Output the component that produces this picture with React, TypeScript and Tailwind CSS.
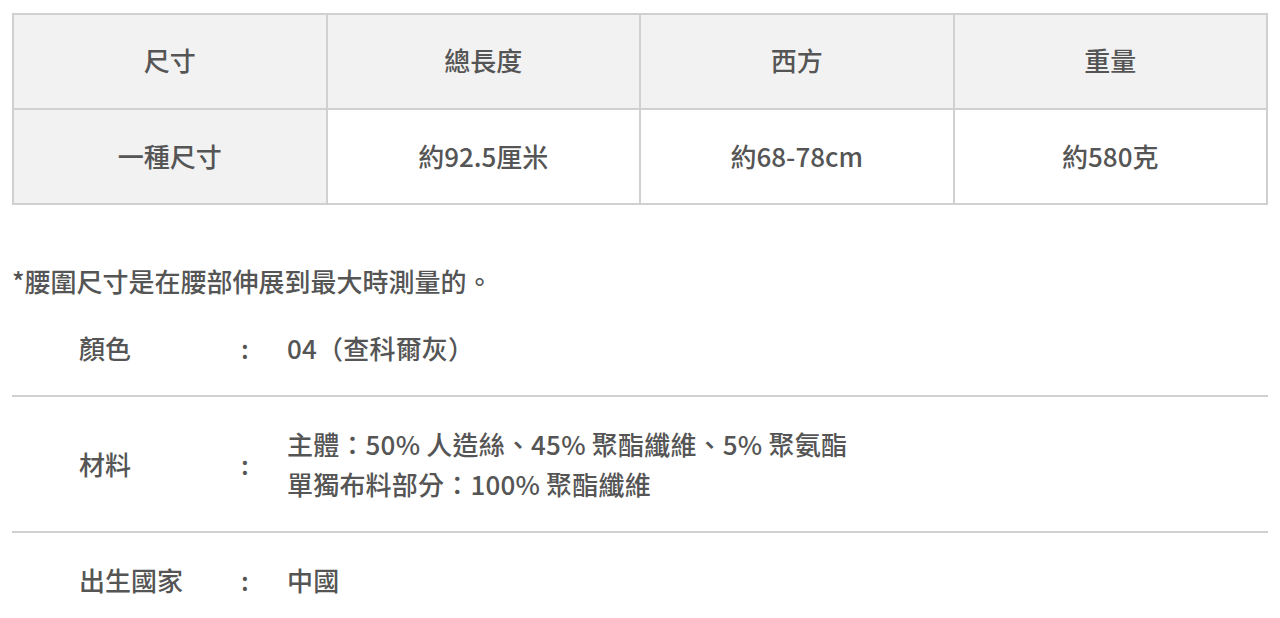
const font = "font-['Noto_Sans_CJK_TC','Noto_Sans',sans-serif]";

const headers = ["尺寸", "總長度", "西方", "重量"];
const values = ["一種尺寸", "約92.5厘米", "約68-78cm", "約580克"];

const specs: { label: string; lines: string[] }[] = [
  { label: "顏色", lines: ["04（查科爾灰）"] },
  {
    label: "材料",
    lines: ["主體：50% 人造絲、45% 聚酯纖維、5% 聚氨酯", "單獨布料部分：100% 聚酯纖維"],
  },
  { label: "出生國家", lines: ["中國"] },
];

export default function App() {
  return (
    <div className={`${font} min-h-[618px] bg-white px-3 pt-[13px] text-[26px] font-medium text-[#555]`}>
      <table className="w-[1256px] table-fixed border-collapse">
        <tbody>
          <tr>
            {headers.map((h) => (
              <td key={h} className="h-[95px] border-2 border-[#d0d0d0] bg-[#f2f2f2] pb-1 text-center">
                {h}
              </td>
            ))}
          </tr>
          <tr>
            {values.map((v, i) => (
              <td
                key={v}
                className={`h-[95px] border-2 border-[#d0d0d0] pb-0.5 text-center ${i === 0 ? "bg-[#f2f2f2]" : "bg-white"}`}
              >
                {v}
              </td>
            ))}
          </tr>
        </tbody>
      </table>

      <p className="mt-[56px] h-[40px] leading-[40px]">*腰圍尺寸是在腰部伸展到最大時測量的。</p>

      <div className="w-[1256px]">
        {specs.map((s, i) => (
          <div
            key={s.label}
            className={`flex items-center py-[27px] ${i < specs.length - 1 ? "border-b-2 border-[#d0d0d0]" : ""}`}
          >
            <div className="h-[40px] w-[229px] pl-[67px] leading-[40px]">{s.label}</div>
            <div className="h-[40px] w-[46px] leading-[40px]">:</div>
            <div className="tracking-[0.2px]">
              {s.lines.map((l) => (
                <div key={l} className="h-[40px] leading-[40px]">
                  {l}
                </div>
              ))}
            </div>
          </div>
        ))}
      </div>
    </div>
  );
}
